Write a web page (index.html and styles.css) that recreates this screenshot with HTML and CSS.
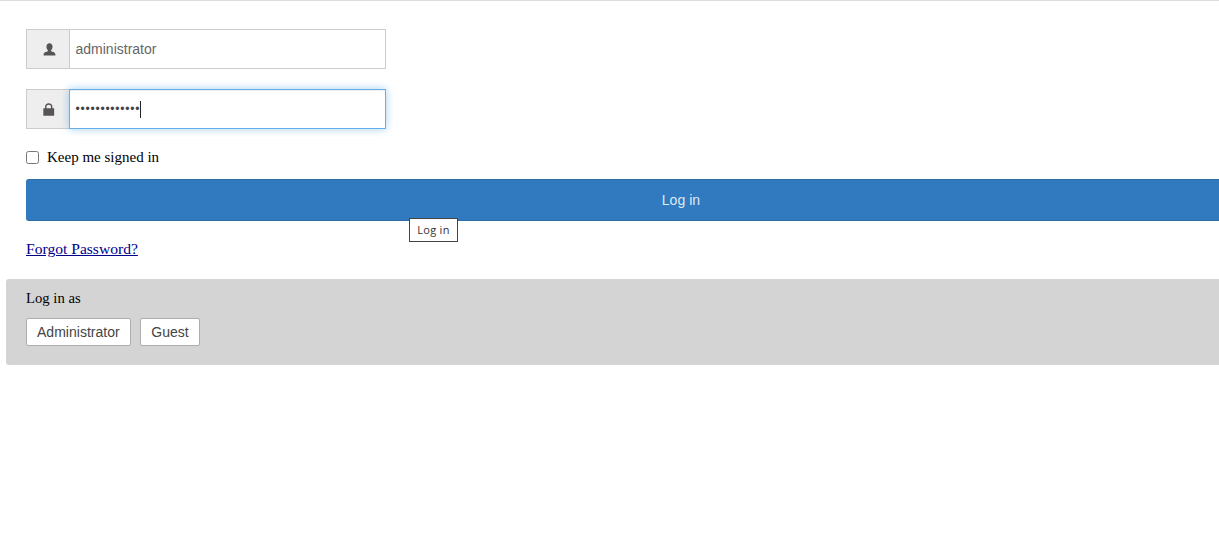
FILE: index.html
```html
<!DOCTYPE html>
<html lang="en">
<head>
<meta charset="utf-8">
<title>Log in</title>
<link rel="stylesheet" href="styles.css">
</head>
<body>
<main class="page">
  <form class="login">
    <div class="group">
      <span class="addon">
        <svg class="icon" viewBox="0 0 12 12" aria-hidden="true"><path d="M6 .3c1.800 0 2.800 1.300 2.800 3.100 0 1.400-.5 2.500-1.300 3.200v1.100c1.600.5 3.300 1 3.700 1.900.2.400.3 1.200.3 1.900H.5c0-.7.100-1.500.3-1.900.4-.9 2.100-1.400 3.700-1.900V6.600C3.700 5.900 3.200 4.800 3.200 3.400 3.200 1.600 4.200.3 6 .3z"/></svg>
      </span>
      <div class="field">administrator</div>
    </div>
    <div class="group">
      <span class="addon">
        <svg class="icon" viewBox="0 0 12 12" aria-hidden="true"><path fill-rule="evenodd" d="M.3 4.800h1.600V3.400C1.900 1.500 3.300.3 5.300.3s3.400 1.200 3.400 3.100v1.400h1.600v7H.3v-7zm2.900 0h4.200V3.400c0-1.100-.8-1.800-2.100-1.800s-2.100.7-2.100 1.800v1.400z"/></svg>
      </span>
      <div class="field field-focus"><span class="dots">•••••••••••••</span><span class="caret"></span></div>
    </div>
    <label class="keep"><input class="check" type="checkbox">Keep me signed in</label>
    <div class="submit-wrap">
      <button class="submit" type="button">Log in</button>
      <span class="tooltip">Log in</span>
    </div>
    <p class="forgot"><a href="#">Forgot Password?</a></p>
  </form>
  <section class="quick">
    <p class="quick-title">Log in as</p>
    <div class="quick-row">
      <button class="quick-btn" type="button">Administrator</button>
      <button class="quick-btn quick-btn-guest" type="button">Guest</button>
    </div>
  </section>
</main>
</body>
</html>
```
FILE: styles.css
```css
html, body {
  margin: 0;
  padding: 0;
  height: 100%;
  overflow: hidden;
  background: #fff;
}
body {
  border-top: 1px solid #ddd;
  box-sizing: border-box;
  font-family: "Liberation Serif", serif;
  font-size: 14.7px;
  color: #000;
}
.page {
  width: 1330px;
  margin-left: 6px;
  padding-top: 28px;
}
.login {
  padding: 0 0 0 20px;
}
.group {
  display: flex;
  width: 360px;
  height: 40px;
  margin-bottom: 20px;
  box-sizing: border-box;
}
.addon {
  width: 43px;
  flex: none;
  display: flex;
  align-items: center;
  justify-content: center;
  box-sizing: border-box;
  padding-left: 2px;
  background: #eee;
  border: 1px solid #ccc;
  border-right: 0;
}
.icon {
  width: 13px;
  height: 13px;
  fill: #555;
}
.field {
  flex: 1;
  display: flex;
  align-items: center;
  box-sizing: border-box;
  padding: 0 6px 0 5.500px;
  border: 1px solid #ccc;
  font-family: "Liberation Sans", Arial, sans-serif;
  font-size: 14px;
  color: #666;
  background: #fff;
}
.field-focus {
  border-color: #66afe9;
  box-shadow: inset 0 1px 1px rgba(0,0,0,.075), 0 0 8px rgba(102,175,233,.6);
}
.dots {
  color: #444;
  font-size: 12px;
  letter-spacing: .780px;
}
.caret {
  width: 1px;
  height: 17px;
  background: #222;
}
.keep {
  display: flex;
  align-items: center;
  height: 17px;
  font-size: 15px;
  line-height: 17px;
}
.check {
  width: 13px;
  height: 13px;
  margin: 0 8px 0 0;
}
.submit-wrap {
  position: relative;
  margin-top: 13px;
}
.submit {
  display: block;
  width: 1310px;
  height: 42px;
  padding: 0;
  border: 0;
  border-top: 1px solid #2e6da4;
  border-bottom: 1px solid #2e6da4;
  border-radius: 3px;
  background: #317ac0;
  color: #dfe9f3;
  font-family: "Liberation Sans", Arial, sans-serif;
  font-size: 14px;
  letter-spacing: .05px;
}
.tooltip {
  position: absolute;
  left: 383px;
  top: 39px;
  box-sizing: border-box;
  width: 49px;
  height: 24px;
  border: 1px solid #444;
  background: #fff;
  color: #333;
  font-family: "Open Sans", sans-serif;
  font-size: 11px;
  letter-spacing: .3px;
  line-height: 22px;
  text-align: center;
}
.forgot {
  margin: 19px 0 22px;
  font-size: 15.600px;
  line-height: 17px;
}
.forgot a {
  color: #00008b;
}
.quick {
  height: 86px;
  box-sizing: border-box;
  padding: 11px 20px 0;
  background: #d4d4d4;
  border-radius: 3px;
}
.quick-title {
  margin: 0 0 11px;
  line-height: 17px;
}
.quick-row {
  display: flex;
  gap: 9px;
}
.quick-btn {
  height: 28px;
  padding: 0 10px;
  border: 1px solid #adadad;
  border-radius: 2px;
  background: #fff;
  color: #444;
  font-family: "Liberation Sans", Arial, sans-serif;
  font-size: 14px;
  letter-spacing: .02px;
}
.quick-btn-guest {
  padding: 0 10.500px;
}
```
